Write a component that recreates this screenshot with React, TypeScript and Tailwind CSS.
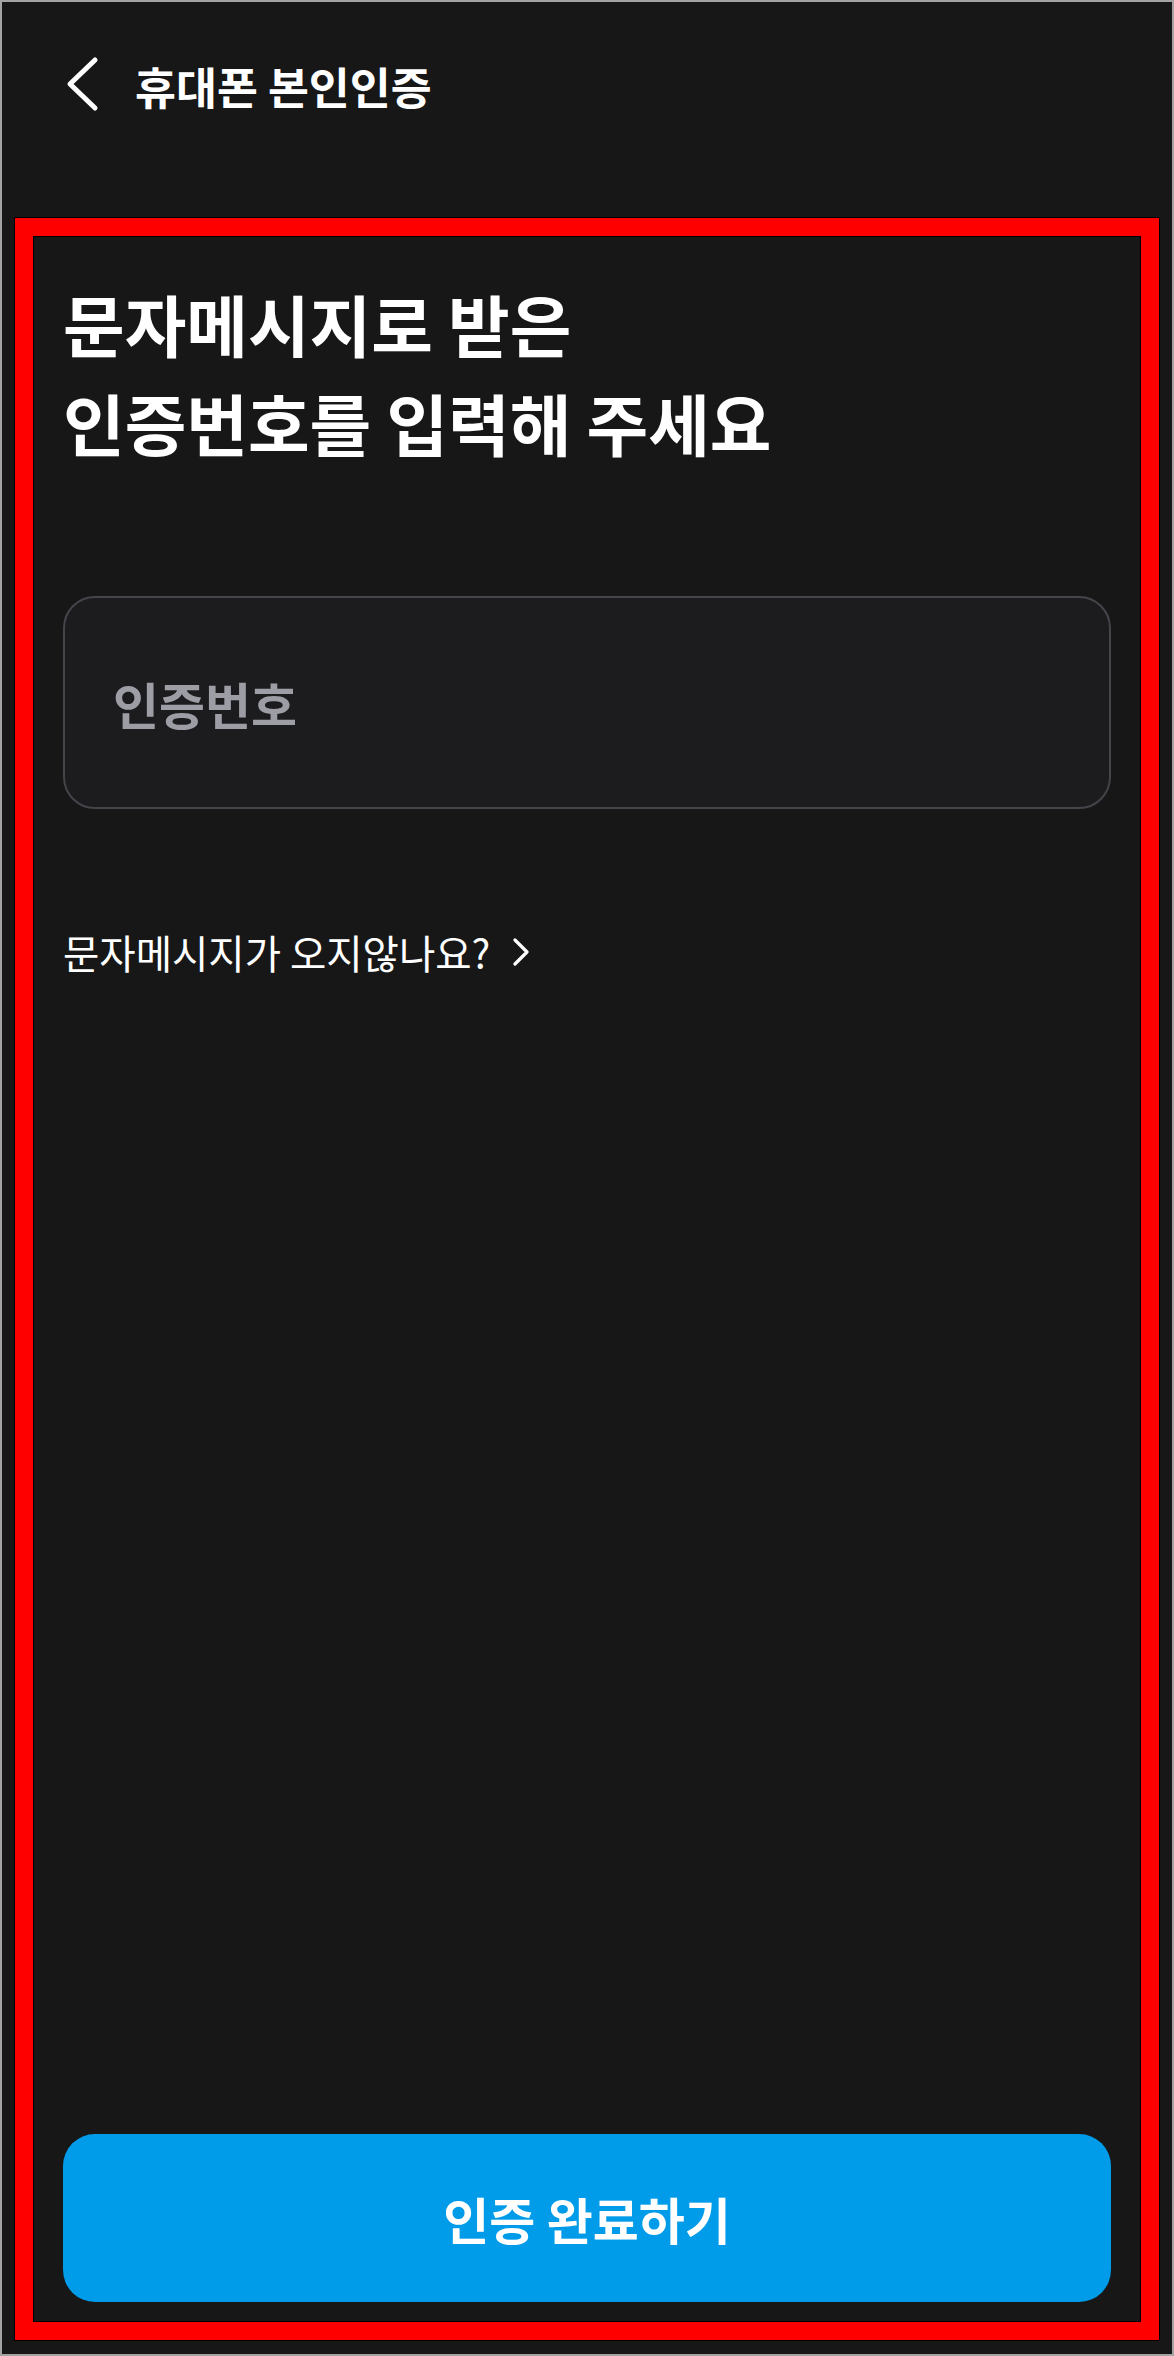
import React from "react";

export default function App() {
  const font = {
    fontFamily: '"Noto Sans CJK KR", "Noto Sans", sans-serif',
  };
  return (
    <div
      className="flex h-[2356px] w-full flex-col border-2 border-[#a3a3a3] bg-[#171717] text-white"
      style={font}
    >
      <header className="flex h-[216px] shrink-0 items-start gap-[35px] pl-[62px] pt-[53px]">
        <button className="flex h-[60px] w-[36px] items-start">
          <svg
            width="36"
            height="60"
            viewBox="0 0 36 60"
            fill="none"
            stroke="white"
            strokeWidth="5"
            strokeLinecap="round"
            strokeLinejoin="round"
          >
            <path d="M31 5 L6 29 L31 53" />
          </svg>
        </button>
        <h2 className="text-[44.5px] font-semibold leading-[62px] tracking-[0px]">
          휴대폰 본인인증
        </h2>
      </header>

      <main className="mx-[13px] mb-[14px] flex flex-1 flex-col border-[18px] border-[#ff0000] px-[30px] pb-[20px] pt-[37px] shadow-[0_0_0_1px_#000,inset_0_0_0_1px_#000]">
        <h1 className="text-[67px] font-bold leading-[99px] tracking-[0px]">
          문자메시지로 받은
          <br />
          인증번호를 입력해 주세요
        </h1>

        <div className="mt-[125px] flex h-[213px] items-center rounded-[32px] border-2 border-[#43454b] bg-[#1c1c1f] px-[48px]">
          <span className="text-[50px] font-semibold leading-[60px] text-[#9d9da5]">
            인증번호
          </span>
        </div>

        <div className="mt-[116px] flex items-center gap-[22px]">
          <span className="text-[39.5px] font-normal leading-[54px]">
            문자메시지가 오지않나요?
          </span>
          <svg
            width="18"
            height="28"
            viewBox="0 0 18 28"
            fill="none"
            stroke="white"
            strokeWidth="3.2"
            strokeLinecap="round"
            strokeLinejoin="round"
          >
            <path d="M3 2 L15 14 L3 26" />
          </svg>
        </div>

        <div className="flex-1" />

        <button className="flex h-[168px] w-full items-center justify-center rounded-[32px] bg-[#009be9] text-[50px] font-semibold text-white">
          인증 완료하기
        </button>
      </main>
    </div>
  );
}
